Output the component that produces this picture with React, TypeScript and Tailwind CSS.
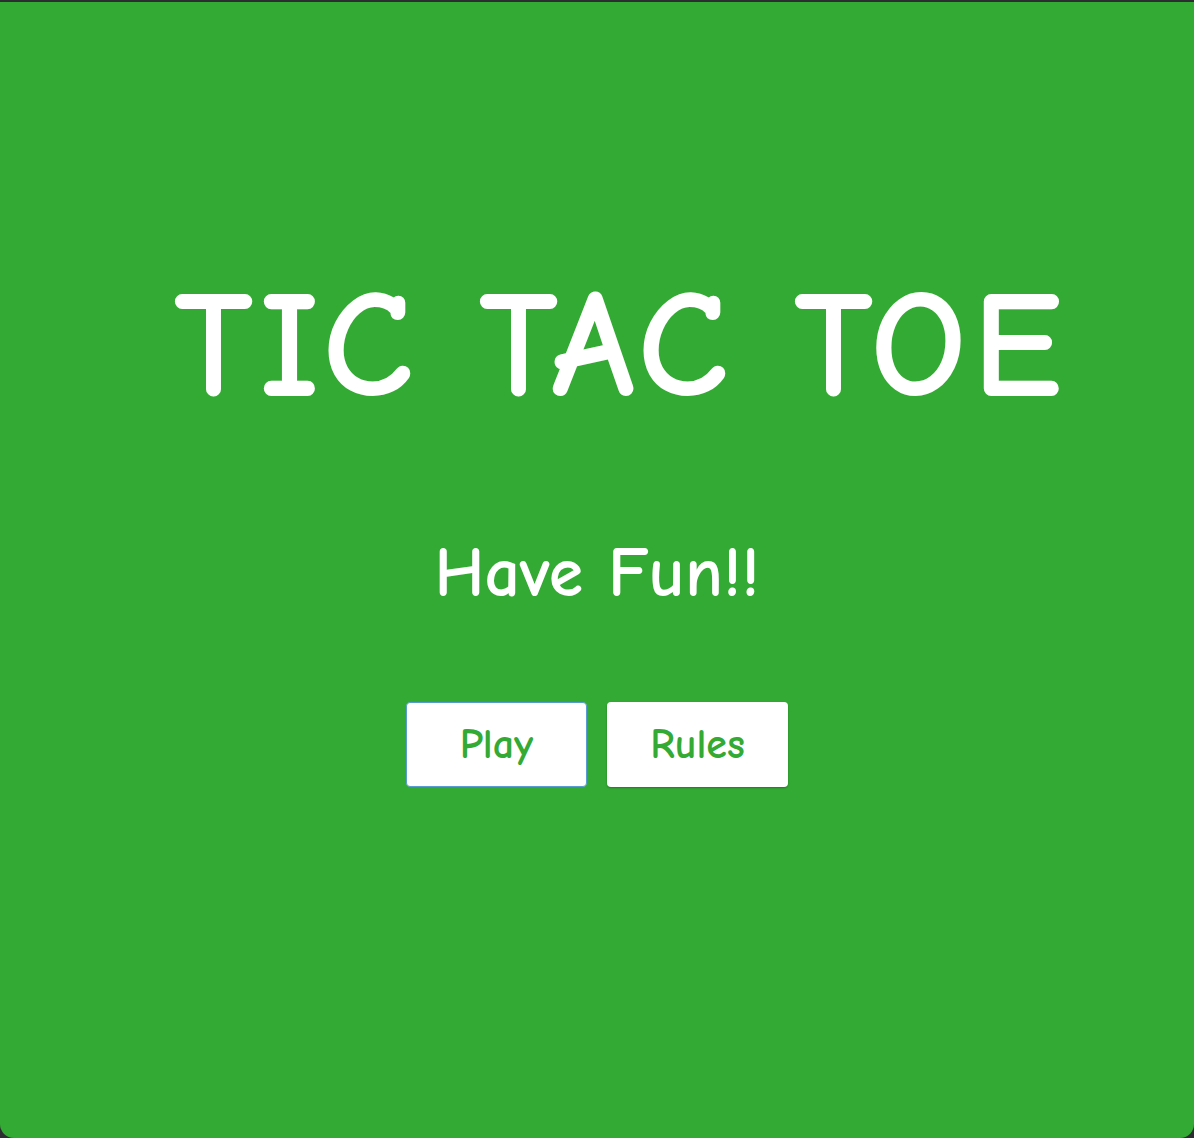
import React from "react";

export default function App() {
  const font = { fontFamily: '"Comic Sans MS", "Comic Neue", "Noto Sans", sans-serif' };
  return (
    <div className="w-[1194px] h-[1138px] bg-[#2b2d30] pt-[2px]">
      <div
        className="w-full h-[1136px] bg-[#33aa33] rounded-b-[14px] flex flex-col items-center text-white"
        style={font}
      >
        <h1 className="mt-[264px] pl-[48px] text-[151px] leading-[160px] font-bold tracking-[6px]">
          TIC TAC TOE
        </h1>
        <p className="mt-[108px] text-[70px] leading-[80px] font-bold">Have Fun!!</p>
        <div className="mt-[88px] flex gap-[20px]">
          <button className="w-[181px] h-[85px] bg-white rounded-[4px] text-[#33aa33] text-[42px] font-bold border border-[#5b9bd5] outline-none">
            Play
          </button>
          <button className="w-[181px] h-[85px] bg-white rounded-[4px] text-[#33aa33] text-[42px] font-bold shadow-[0_1px_2px_rgba(0,0,0,0.3)]">
            Rules
          </button>
        </div>
      </div>
    </div>
  );
}
